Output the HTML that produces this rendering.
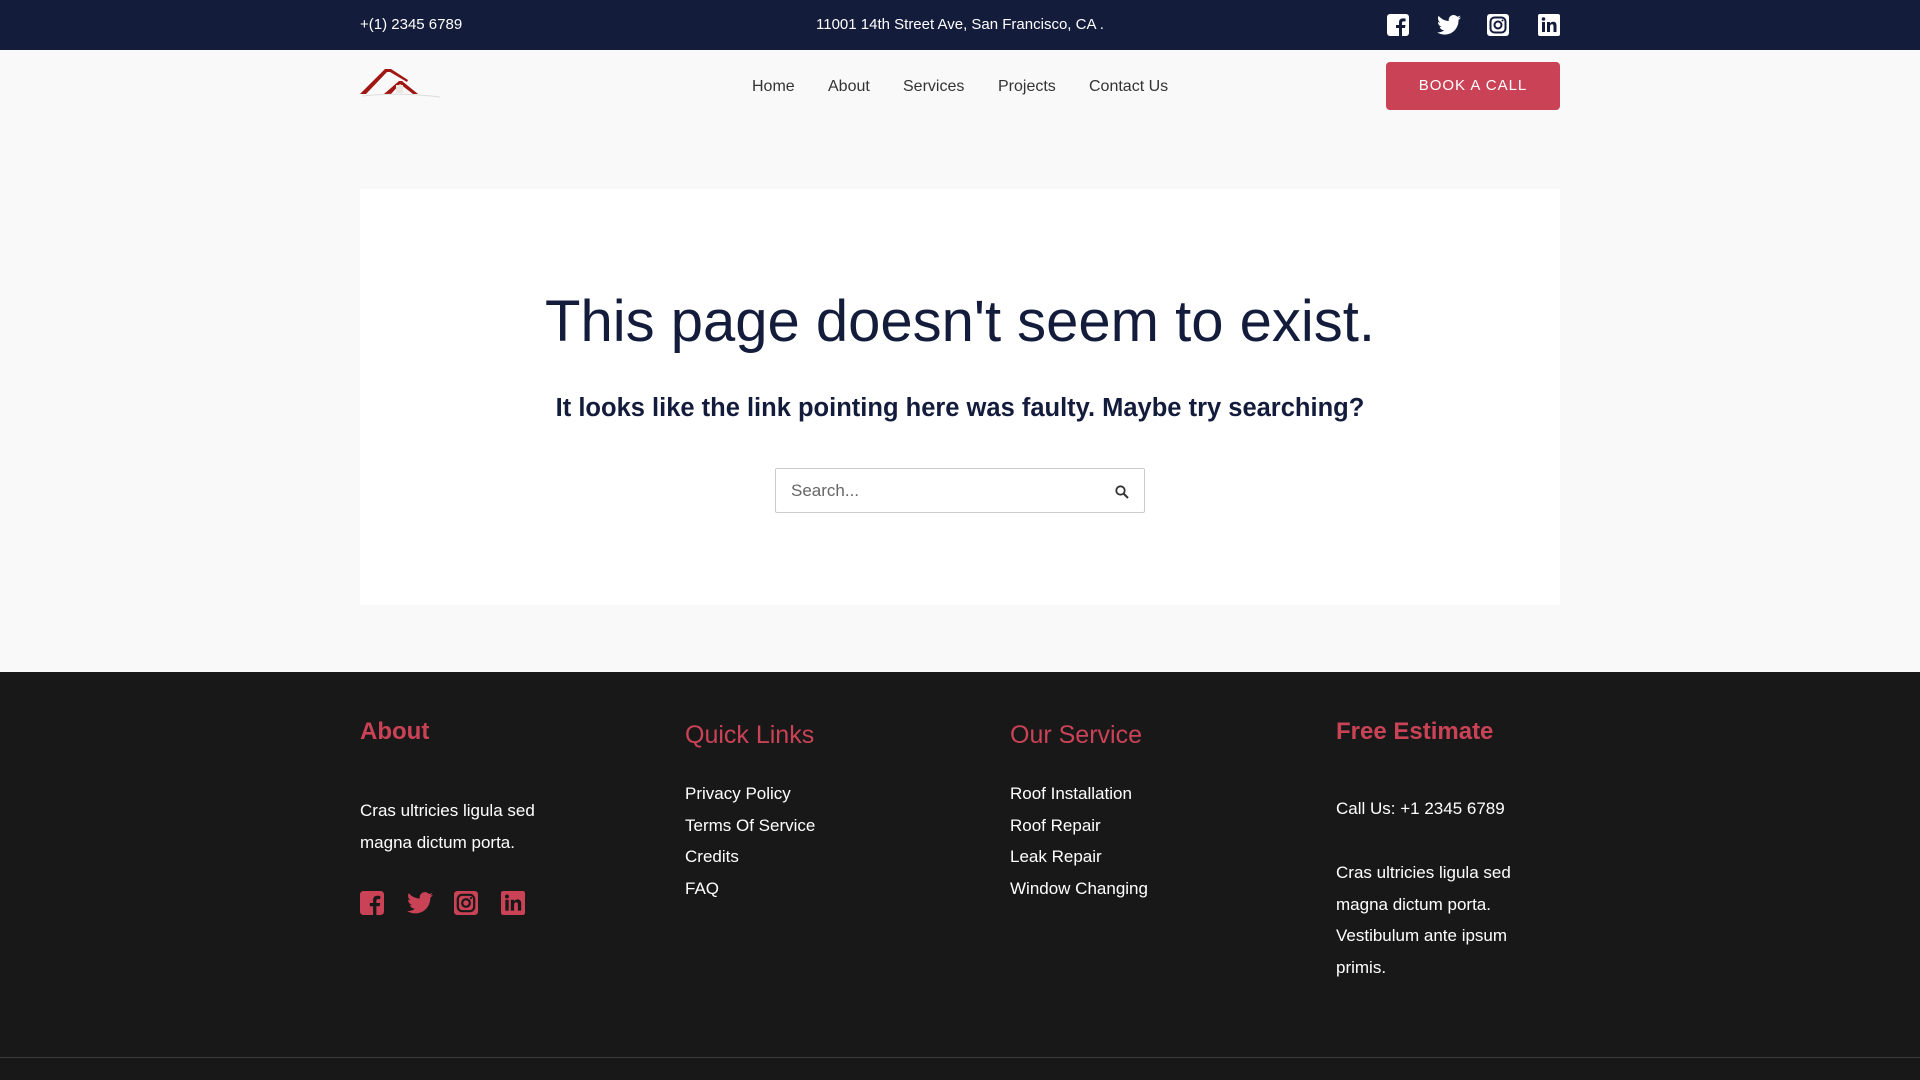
<!DOCTYPE html>
<html><head><meta charset="utf-8"><style>
*{margin:0;padding:0;box-sizing:border-box}
body{width:1920px;height:1080px;overflow:hidden;background:#f9f9f9;font-family:"Liberation Sans",sans-serif;position:relative}
.a{position:absolute}
.top{left:0;top:0;width:1920px;height:50px;background:#141c3c;color:#fff;font-size:15px}
.nav a{position:absolute;top:78px;font-size:16px;color:#333;text-decoration:none}
.btn{left:1386px;top:62px;width:174px;height:48px;background:#ca4256;border-radius:4px;color:#fff;font-size:15px;letter-spacing:1px;text-align:center;line-height:48px}
.box{left:360px;top:189px;width:1200px;height:416px;background:#fff}
.foot{left:0;top:672px;width:1920px;height:408px;background:#181818}
.h{color:#ca4256;font-size:24px}
.w{color:#fff;font-size:17px}
</style></head><body>
<div class="a top">
<div class="a" style="left:360px;top:16px">+(1) 2345 6789</div>
<div class="a" style="left:0;width:1920px;text-align:center;top:16px">11001 14th Street Ave, San Francisco, CA .</div>
<svg class="a" style="left:1387px;top:14px" width="22" height="22" viewBox="0 0 22 22"><rect width="22" height="22" rx="3" fill="#fff"/><path d="M15 22v-8h3l.5-3H15V9c0-1 .4-1.6 1.7-1.6H18.6V4.6c-.5-.1-1.6-.2-2.6-.2-2.6 0-4 1.5-4 4.2V11H9v3h3v8z" fill="#141c3c"/></svg>
<svg class="a" style="left:1437px;top:15px" width="24" height="20" viewBox="0 0 24 20"><path d="M24 2.4c-.9.4-1.8.6-2.8.8 1-.6 1.8-1.6 2.200-2.7-1 .6-2 1-3.1 1.2C19.3.7 18 0 16.6 0c-2.7 0-4.9 2.2-4.9 4.9 0 .4 0 .8.1 1.1C7.7 5.8 4.1 3.9 1.7.9c-.4.7-.7 1.6-.7 2.5 0 1.7.9 3.2 2.2 4.1-.8 0-1.6-.2-2.2-.6v.1c0 2.4 1.7 4.4 3.9 4.8-.4.1-.8.2-1.3.2-.3 0-.6 0-.9-.1.6 2 2.4 3.4 4.6 3.4-1.7 1.3-3.8 2.1-6.1 2.1-.4 0-.8 0-1.2-.1C2.2 18.8 4.8 19.6 7.5 19.600c9.1 0 14-7.5 14-14v-.6c1-.7 1.8-1.6 2.5-2.6z" fill="#fff"/></svg>
<svg class="a" style="left:1487px;top:14px" width="22" height="22" viewBox="0 0 22 22"><rect width="22" height="22" rx="3" fill="#fff"/><rect x="3.5" y="3.5" width="15" height="15" rx="4" fill="none" stroke="#141c3c" stroke-width="2"/><circle cx="11" cy="11" r="3.5" fill="none" stroke="#141c3c" stroke-width="2"/><circle cx="15.5" cy="6.5" r="1" fill="#141c3c"/></svg>
<svg class="a" style="left:1538px;top:14px" width="22" height="22" viewBox="0 0 22 22"><rect width="22" height="22" rx="2" fill="#fff"/><rect x="4" y="8" width="3" height="10" fill="#141c3c"/><circle cx="5.5" cy="5" r="1.8" fill="#141c3c"/><path d="M9 8h3v1.5c.6-1 1.7-1.8 3.3-1.8 2.5 0 3.2 1.7 3.2 4V18h-3v-5.5c0-1.3-.3-2.2-1.5-2.2S12 11.3 12 12.5V18H9z" fill="#141c3c"/></svg>
</div>
<svg class="a" style="left:360px;top:68px" width="80" height="30" viewBox="0 0 80 30"><path d="M0 26 L25 1 L31 1 L48 12 L47 14 L30 4 L27 4 L6 26z" fill="#a01612"/><path d="M24 26 L39 13 L42 13 L58 26 L53 26 L40 16 L31 26z" fill="#a01612"/><path d="M2 28 Q40 24 80 29" stroke="#ddd" fill="none"/><rect x="36" y="17" width="7" height="8" fill="#e8e8e0"/></svg>
<div class="nav"><a style="left:752px">Home</a><a style="left:828px">About</a><a style="left:903px">Services</a><a style="left:998px">Projects</a><a style="left:1089px">Contact Us</a></div>
<div class="a btn">BOOK A CALL</div>
<div class="a box">
<div class="a" style="left:0;width:1200px;top:99px;text-align:center;font-size:58px;color:#141c3c">This page doesn't seem to exist.</div>
<div class="a" style="left:0;width:1200px;top:205px;text-align:center;font-size:25.5px;font-weight:bold;color:#141c3c">It looks like the link pointing here was faulty. Maybe try searching?</div>
<div class="a" style="left:415px;top:279px;width:370px;height:45px;border:1px solid #ccc;border-radius:2px;background:#fff">
<div class="a" style="left:15px;top:12px;font-size:17px;color:#666">Search...</div>
<svg class="a" style="left:339px;top:16px" width="14" height="14" viewBox="0 0 14 14"><circle cx="5.5" cy="5.5" r="4.2" fill="none" stroke="#333" stroke-width="1.8"/><path d="M8.5 8.5L13 13" stroke="#333" stroke-width="2"/></svg>
</div>
</div>
<div class="a foot">
<div class="a h" style="left:360px;top:46px;font-weight:bold">About</div>
<div class="a w" style="left:360px;top:123px;line-height:32px">Cras ultricies ligula sed<br>magna dictum porta.</div>
<svg class="a" style="left:360px;top:219px" width="24" height="24" viewBox="0 0 22 22"><rect width="22" height="22" rx="3" fill="#ca4256"/><path d="M15 22v-8h3l.5-3H15V9c0-1 .4-1.6 1.7-1.6H18.6V4.6c-.5-.1-1.6-.2-2.6-.2-2.6 0-4 1.5-4 4.2V11H9v3h3v8z" fill="#181818"/></svg>
<svg class="a" style="left:407px;top:220px" width="26" height="22" viewBox="0 0 24 20"><path d="M24 2.4c-.9.4-1.8.6-2.8.8 1-.6 1.8-1.6 2.2-2.7-1 .6-2 1-3.1 1.2C19.3.7 18 0 16.6 0c-2.7 0-4.9 2.2-4.9 4.9 0 .4 0 .8.1 1.1C7.7 5.8 4.1 3.9 1.7.9c-.4.7-.7 1.6-.7 2.5 0 1.7.9 3.2 2.2 4.1-.8 0-1.6-.2-2.2-.6v.1c0 2.4 1.7 4.4 3.9 4.8-.4.1-.8.2-1.3.2-.3 0-.6 0-.9-.1.6 2 2.4 3.4 4.6 3.4-1.7 1.3-3.8 2.1-6.1 2.1-.4 0-.8 0-1.2-.1C2.2 18.8 4.8 19.6 7.5 19.6c9.1 0 14-7.5 14-14v-.6c1-.7 1.8-1.6 2.5-2.6z" fill="#ca4256"/></svg>
<svg class="a" style="left:454px;top:219px" width="24" height="24" viewBox="0 0 22 22"><rect width="22" height="22" rx="3" fill="#ca4256"/><rect x="3.5" y="3.5" width="15" height="15" rx="4" fill="none" stroke="#181818" stroke-width="2"/><circle cx="11" cy="11" r="3.5" fill="none" stroke="#181818" stroke-width="2"/><circle cx="15.5" cy="6.5" r="1" fill="#181818"/></svg>
<svg class="a" style="left:501px;top:219px" width="24" height="24" viewBox="0 0 22 22"><rect width="22" height="22" rx="2" fill="#ca4256"/><rect x="4" y="8" width="3" height="10" fill="#181818"/><circle cx="5.5" cy="5" r="1.8" fill="#181818"/><path d="M9 8h3v1.5c.6-1 1.7-1.8 3.3-1.8 2.5 0 3.2 1.7 3.2 4V18h-3v-5.5c0-1.3-.3-2.2-1.5-2.2S12 11.3 12 12.5V18H9z" fill="#181818"/></svg>
<div class="a h" style="left:685px;top:49px;font-size:25px">Quick Links</div>
<div class="a w" style="left:685px;top:106px;line-height:31.5px">Privacy Policy<br>Terms Of Service<br>Credits<br>FAQ</div>
<div class="a h" style="left:1010px;top:49px;font-size:25px">Our Service</div>
<div class="a w" style="left:1010px;top:106px;line-height:31.5px">Roof Installation<br>Roof Repair<br>Leak Repair<br>Window Changing</div>
<div class="a h" style="left:1336px;top:46px;font-weight:bold">Free Estimate</div>
<div class="a w" style="left:1336px;top:127px">Call Us: +1 2345 6789</div>
<div class="a w" style="left:1336px;top:185px;line-height:31.5px">Cras ultricies ligula sed<br>magna dictum porta.<br>Vestibulum ante ipsum<br>primis.</div>
<div class="a" style="left:0;top:385px;width:1920px;height:1px;background:#3a3a3a"></div>
</div>
</body></html>
